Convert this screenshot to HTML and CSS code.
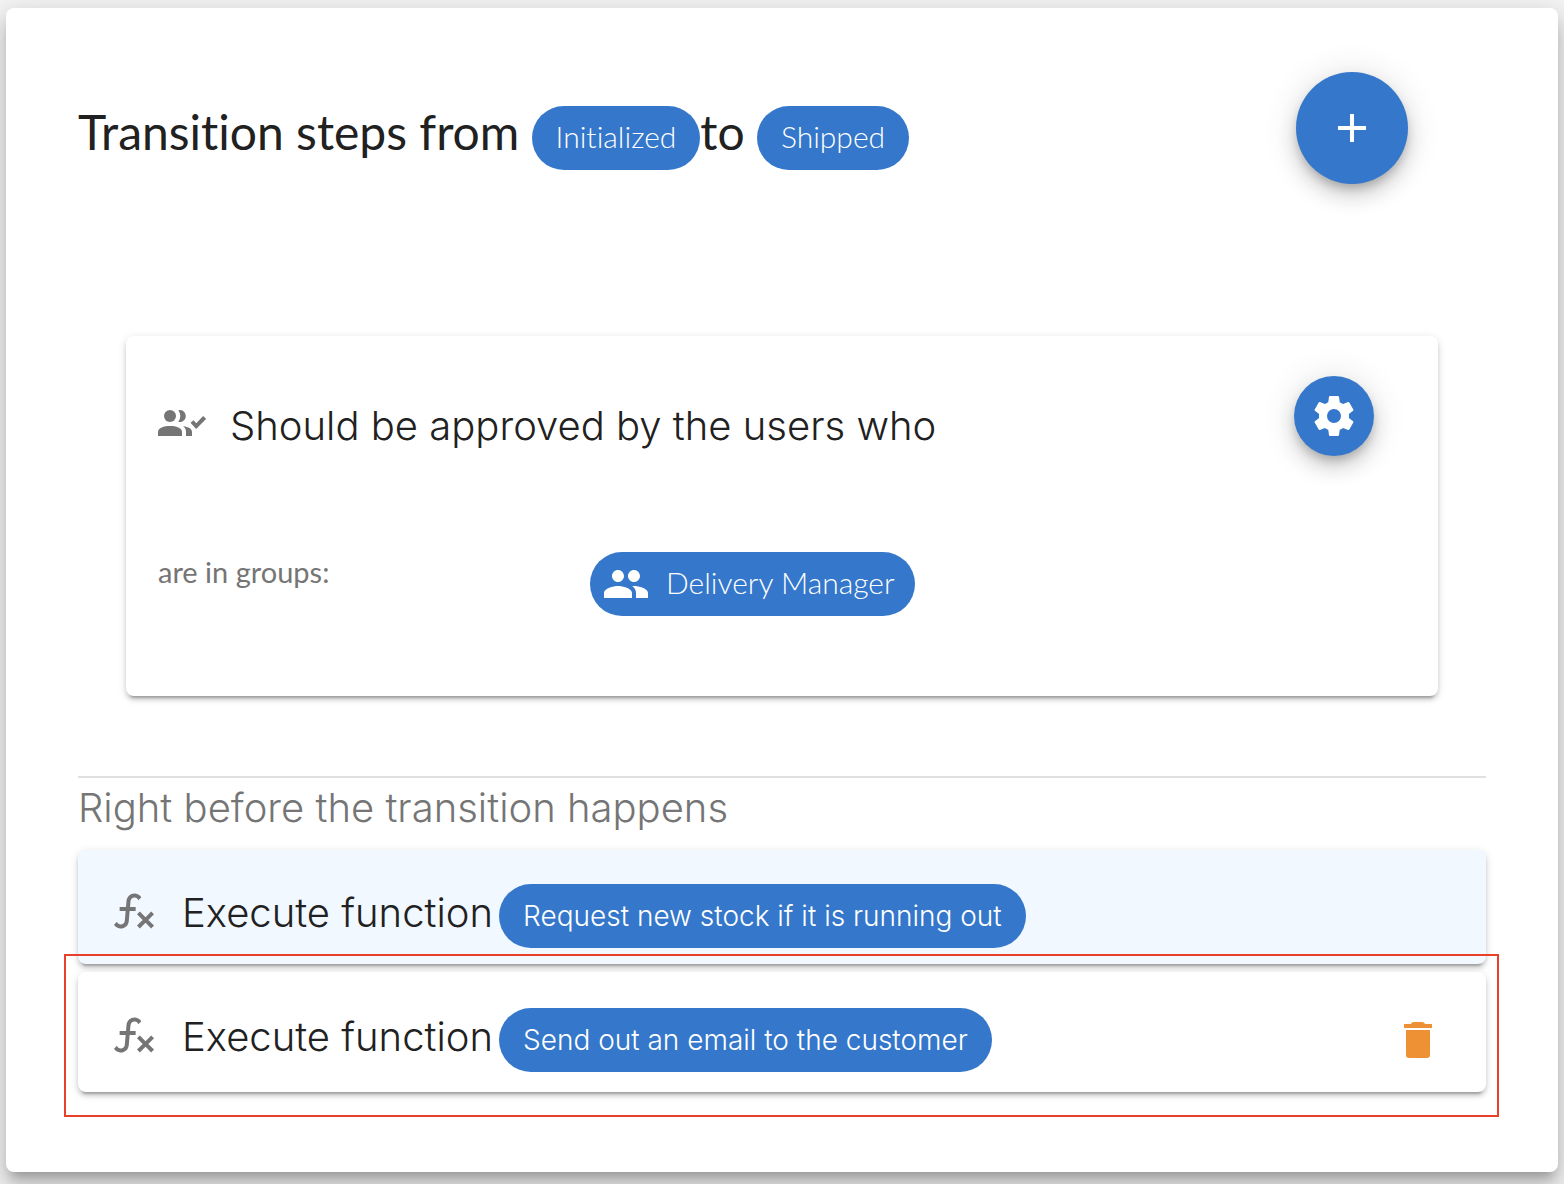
FILE: index.html
```html
<!DOCTYPE html>
<html lang="en">
<head>
<meta charset="utf-8">
<title>Transition steps</title>
<link rel="stylesheet" href="styles.css">
</head>
<body>
<svg class="defs" aria-hidden="true">
  <symbol id="fx" viewBox="0 0 24 24"><path d="M12.42,5.29C11.32,5.19 10.35,6 10.25,7.11L10,10H12.82V12H9.82L9.38,17.07C9.18,19.27 7.24,20.9 5.04,20.7C3.79,20.59 2.66,19.9 2,18.83L3.5,17.33C3.83,18.38 4.96,18.97 6,18.63C6.78,18.39 7.33,17.7 7.4,16.89L7.82,12H4.82V10H8L8.27,6.93C8.46,4.73 10.39,3.1 12.6,3.28C13.86,3.39 15,4.09 15.66,5.17L14.16,6.67C13.91,5.9 13.23,5.36 12.42,5.29M22,13.65L20.59,12.24L17.76,15.07L14.93,12.24L13.5,13.65L16.35,16.5L13.5,19.31L14.93,20.72L17.76,17.89L20.59,20.72L22,19.31L19.17,16.5L22,13.65Z"/></symbol>
</svg>
<main class="dialog">
  <header class="header">
    <h1 class="title">Transition steps from <span class="chip">Initialized</span>to <span class="chip">Shipped</span></h1>
    <button class="fab fab-large" type="button" aria-label="Add step">
      <svg class="icon" viewBox="0 0 24 24"><path d="M19 13h-6v6h-2v-6H5v-2h6V5h2v6h6v2z"/></svg>
    </button>
  </header>

  <section class="card approval">
    <div class="approval-head">
      <svg class="icon" viewBox="0 0 48 48"><circle cx="12" cy="16" r="6"/><path d="M20.3 10.2A6 6 0 1 1 20.3 21.8A10 10 0 0 0 20.3 10.2z"/><path d="M0 36v-4c0-4.2 6-6 12-6s12 1.800 12 6v4z"/><path d="M25.300 26.300c5 .5 8.700 2.500 8.700 5.700v4h-6v-4c0-2.400-.9-4.300-2.700-5.700z"/><path class="tick" d="M34 21.500l4.200 4.600 8.400-8.600"/></svg>
      <h2 class="subtitle">Should be approved by the users who</h2>
      <button class="fab" type="button" aria-label="Settings">
        <svg class="icon" viewBox="0 0 24 24"><path d="M12,15.5A3.5,3.5 0 0,1 8.5,12A3.5,3.5 0 0,1 12,8.5A3.5,3.5 0 0,1 15.5,12A3.5,3.5 0 0,1 12,15.5M19.43,12.97C19.47,12.65 19.5,12.33 19.5,12C19.5,11.67 19.47,11.34 19.43,11L21.54,9.37C21.73,9.22 21.78,8.95 21.66,8.73L19.66,5.27C19.54,5.05 19.27,4.96 19.05,5.05L16.56,6.05C16.04,5.66 15.5,5.32 14.87,5.07L14.5,2.42C14.46,2.18 14.25,2 14,2H10C9.75,2 9.54,2.18 9.5,2.42L9.13,5.07C8.5,5.32 7.96,5.66 7.44,6.05L4.95,5.05C4.73,4.96 4.46,5.05 4.34,5.27L2.34,8.73C2.21,8.95 2.27,9.22 2.46,9.37L4.57,11C4.53,11.34 4.5,11.67 4.5,12C4.5,12.33 4.53,12.65 4.57,12.97L2.46,14.63C2.27,14.78 2.21,15.05 2.34,15.27L4.34,18.73C4.46,18.95 4.73,19.03 4.95,18.95L7.44,17.94C7.96,18.34 8.5,18.68 9.13,18.93L9.5,21.58C9.54,21.82 9.75,22 10,22H14C14.25,22 14.46,21.82 14.5,21.58L14.87,18.93C15.5,18.67 16.04,18.34 16.56,17.94L19.05,18.95C19.27,19.03 19.54,18.95 19.66,18.73L21.66,15.27C21.78,15.05 21.73,14.78 21.54,14.63L19.43,12.97Z"/></svg>
      </button>
    </div>
    <div class="groups">
      <span class="groups-label">are in groups:</span>
      <span class="chip chip-icon">
        <svg class="icon" viewBox="0 0 24 24"><path d="M16 11c1.660 0 2.990-1.340 2.990-3S17.660 5 16 5c-1.660 0-3 1.340-3 3s1.340 3 3 3zm-8 0c1.660 0 2.990-1.340 2.990-3S9.660 5 8 5C6.340 5 5 6.340 5 8s1.340 3 3 3zm0 2c-2.330 0-7 1.170-7 3.500V19h14v-2.500c0-2.330-4.670-3.500-7-3.500zm8 0c-.29 0-.62.020-.97.050 1.160.840 1.970 1.970 1.970 3.450V19h6v-2.500c0-2.330-4.670-3.500-7-3.500z"/></svg>
        <span class="chip-label">Delivery Manager</span>
      </span>
    </div>
  </section>

  <section class="before">
    <h2 class="subtitle muted">Right before the transition happens</h2>
    <ul class="steps">
      <li class="card step step-tinted">
        <svg class="icon"><use href="#fx"/></svg>
        <span class="subtitle">Execute function</span>
        <span class="chip chip-step">Request new stock if it is running out</span>
      </li>
      <li class="card step step-marked">
        <svg class="icon"><use href="#fx"/></svg>
        <span class="subtitle">Execute function</span>
        <span class="chip chip-step">Send out an email to the customer</span>
        <button class="delete" type="button" aria-label="Delete step">
          <svg class="icon" viewBox="0 0 24 24"><path d="M19,4H15.500C15.200,3.400 14.900,3 14,3H10C9.100,3 8.800,3.400 8.500,4H5V6H19V4M6,19.500A1.500,1.500 0 0,0 7.500,21H16.500A1.500,1.500 0 0,0 18,19.500V7H6V19.500Z"/></svg>
        </button>
      </li>
    </ul>
  </section>
</main>
</body>
</html>
```
FILE: styles.css
```css
* { box-sizing: border-box; }

body {
  margin: 0;
  padding: 8px 6px 12px;
  background: #f4f4f4;
  color: #212121;
  font-family: Lato, "Open Sans", sans-serif;
  font-weight: 400;
  font-variant-ligatures: none;
}

h1, h2, ul { margin: 0; padding: 0; font-weight: inherit; }
button { border: 0; padding: 0; cursor: pointer; }
.defs { display: none; }

.icon {
  flex: none;
  display: block;
  width: 48px;
  height: 48px;
  fill: currentColor;
}
.tick { fill: none; stroke: currentColor; stroke-width: 4; }

.dialog {
  padding: 64px 72px 80px;
  border-radius: 8px;
  background: #fff;
  box-shadow: 0 10px 10px -6px rgba(0,0,0,.2), 0 16px 20px 2px rgba(0,0,0,.14), 0 6px 28px 4px rgba(0,0,0,.12);
}

.header {
  display: flex;
  justify-content: space-between;
  align-items: flex-start;
  padding-right: 78px;
}
.title {
  padding-top: 28px;
  font-size: 48px;
  line-height: 64px;
}

.chip {
  display: inline-flex;
  align-items: center;
  height: 64px;
  padding: 0 24px 4px;
  border-radius: 32px;
  background: #3477cb;
  color: #fff;
  font-size: 30px;
  font-weight: 300;
  line-height: 60px;
  vertical-align: middle;
  white-space: nowrap;
}
.chip-icon { gap: 16px; padding: 0 20px 0 12px; }
.chip-label { padding-bottom: 4px; }
.chip-step { font-family: Inter, sans-serif; font-size: 28px; padding: 0 24px; }

.fab {
  flex: none;
  display: grid;
  place-items: center;
  width: 80px;
  height: 80px;
  border-radius: 50%;
  background: #3477cb;
  color: #fff;
  box-shadow: 0 6px 10px -2px rgba(0,0,0,.2), 0 12px 20px rgba(0,0,0,.14), 0 2px 36px rgba(0,0,0,.12);
}
.fab-large { width: 112px; height: 112px; }

.card {
  border-radius: 8px;
  background: #fff;
  box-shadow: 0 6px 2px -4px rgba(0,0,0,.2), 0 4px 4px rgba(0,0,0,.14), 0 2px 10px rgba(0,0,0,.12);
}

.subtitle {
  font-family: Inter, sans-serif;
  font-size: 40px;
  font-weight: 300;
  line-height: 64px;
}
.muted { color: #757575; line-height: 60px; }

.approval {
  margin: 152px 48px 80px;
  padding: 40px 64px 80px 32px;
}
.approval-head { display: flex; color: #757575; }
.approval-head > .icon { margin-top: 24px; }
.approval-head .subtitle { flex: 1; padding: 18px 0 0 24px; color: #212121; }
.approval-head .fab { color: #fff; }

.groups {
  display: grid;
  grid-template-columns: 432px auto;
  justify-content: start;
  margin-top: 94px;
}
.groups-label { color: #757575; font-size: 29px; line-height: 40px; }

.before { border-top: 2px solid #e0e0e0; }
.steps { display: grid; gap: 8px; padding-top: 12px; list-style: none; }
.step {
  position: relative;
  display: flex;
  align-items: flex-start;
  padding: 34px 44px 16px 32px;
}
.step > .icon { margin-top: 3px; color: #757575; }
.step .subtitle { padding: 0 6px 0 24px; line-height: 58px; }
.step-tinted { background: #f1f8ff; }
.step-marked { padding: 36px 44px 20px 32px; }
.step-marked::after {
  content: "";
  position: absolute;
  inset: -18px -13px -25px -14px;
  border: 2px solid #e9402a;
  pointer-events: none;
}
.delete { margin: 8px 0 0 auto; background: none; color: #ee9135; }
```
